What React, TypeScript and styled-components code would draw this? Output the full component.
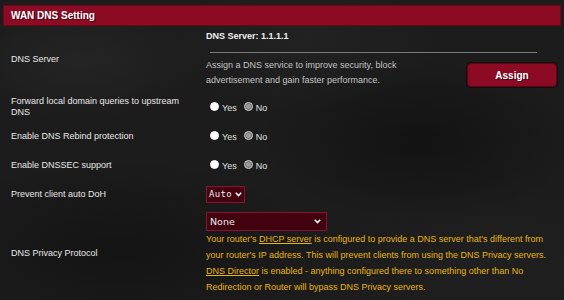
import React from "react";
import styled, { createGlobalStyle } from "styled-components";

const Global = createGlobalStyle`
  html, body { margin: 0; padding: 0; }
  body {
    width: 564px;
    height: 300px;
    overflow: hidden;
    background-color: #1c1c1c;
    background-image:
      radial-gradient(ellipse 120px 60px at 80px 60px, rgba(40,40,40,0.7), transparent),
      radial-gradient(ellipse 160px 80px at 420px 140px, rgba(12,12,12,0.6), transparent),
      radial-gradient(ellipse 140px 70px at 300px 40px, rgba(38,38,38,0.6), transparent),
      radial-gradient(ellipse 200px 90px at 120px 250px, rgba(14,14,14,0.6), transparent),
      radial-gradient(ellipse 180px 80px at 500px 270px, rgba(34,34,34,0.6), transparent);
    font-family: "Liberation Sans", Arial, sans-serif;
    font-size: 9px;
    color: #e6e6e6;
  }
`;

const Page = styled.div`
  padding: 5px 3px 0 3px;
`;

const Header = styled.div`
  height: 19px;
  background: #8d0a24;
  border: 1px solid #6e0618;
  display: flex;
  align-items: center;
  padding-left: 7px;
  font-weight: bold;
  font-size: 10px;
  color: #fff;
  text-shadow: 1px 1px 0 rgba(0, 0, 0, 0.55);
`;

const Row = styled.div<{ $h: number }>`
  display: grid;
  grid-template-columns: 203px 1fr;
  height: ${(p) => p.$h}px;
`;

const Label = styled.div`
  display: flex;
  align-items: center;
  padding-left: 8px;
  line-height: 11px;
  color: #e8e8e8;
`;

const Value = styled.div<{ $top?: boolean }>`
  display: flex;
  flex-direction: column;
  justify-content: ${(p) => (p.$top ? "flex-start" : "center")};
`;

const Title = styled.div`
  margin-top: 4px;
  font-weight: bold;
  line-height: 12px;
  color: #f0f0f0;
`;

const Rule = styled.div`
  height: 1px;
  background: #7a7a7a;
  margin: 10px 24px 5px 4px;
`;

const DescRow = styled.div`
  display: flex;
  align-items: center;
  justify-content: space-between;
  padding-right: 4px;
`;

const Desc = styled.div`
  line-height: 15.3px;
  color: #c4c4c4;
`;

const AssignButton = styled.button`
  width: 90px;
  height: 24px;
  margin-top: 4px;
  background: #8d0a24;
  border: 1px solid #5a0414;
  border-radius: 4px;
  color: #fff;
  font-family: "Liberation Sans", Arial, sans-serif;
  font-weight: bold;
  font-size: 10px;
  text-shadow: 1px 1px 0 rgba(0, 0, 0, 0.6);
  box-shadow: 0 0 0 1px rgba(0, 0, 0, 0.4);
  padding: 0;
`;

const RadioGroup = styled.div`
  display: flex;
  align-items: center;
  padding-left: 4px;
`;

const RadioDot = styled.span<{ $checked?: boolean }>`
  width: 9px;
  height: 9px;
  border-radius: 50%;
  box-sizing: border-box;
  background: ${(p) => (p.$checked ? "#9a9a9a" : "#ffffff")};
  border: ${(p) => (p.$checked ? "1.5px solid #c8c8c8" : "1px solid #f4f4f4")};
  box-shadow: ${(p) => (p.$checked ? "inset 0 0 0 1px #6a6a6a" : "none")};
  margin-right: 3px;
  margin-top: -2px;
`;

const RadioText = styled.span<{ $gap?: number }>`
  color: #e0e0e0;
  font-size: 9px;
  margin-top: 2px;
  margin-right: ${(p) => p.$gap ?? 0}px;
`;

const Select = styled.div<{ $w: number; $h: number; $mt?: number; $mono?: boolean }>`
  width: ${(p) => p.$w}px;
  height: ${(p) => p.$h}px;
  margin-top: ${(p) => p.$mt ?? 0}px;
  box-sizing: border-box;
  background: #42020f;
  border: 1px solid #85122e;
  display: flex;
  align-items: center;
  justify-content: space-between;
  padding: ${(p) => (p.$mono ? "0 2px 0 2px" : "0 5px 0 3px")};
  color: #eaeaea;
  font-family: ${(p) => (p.$mono ? '"DejaVu Sans Mono", monospace' : '"DejaVu Sans", sans-serif')};
  font-size: ${(p) => (p.$mono ? "9px" : "9.5px")};
  letter-spacing: ${(p) => (p.$mono ? "0.3px" : "0")};
`;

const Chevron = () => (
  <svg width="7" height="5" viewBox="0 0 7 5" style={{ flexShrink: 0 }}>
    <path d="M0.8 0.8 L3.5 3.6 L6.2 0.8" fill="none" stroke="#ffffff" strokeWidth="1.5" />
  </svg>
);

const Hint = styled.div`
  line-height: 16px;
  color: #e8b410;
`;

const HintLink = styled.span`
  text-decoration: underline;
`;

function YesNo() {
  return (
    <RadioGroup>
      <RadioDot />
      <RadioText $gap={7}>Yes</RadioText>
      <RadioDot $checked />
      <RadioText>No</RadioText>
    </RadioGroup>
  );
}

export default function App() {
  return (
    <>
      <Global />
      <Page>
        <Header>WAN DNS Setting</Header>
        <Row $h={66}>
          <Label>DNS Server</Label>
          <Value $top>
            <Title>DNS Server: 1.1.1.1</Title>
            <Rule />
            <DescRow>
              <Desc>
                Assign a DNS service to improve security, block
                <br />
                advertisement and gain faster performance.
              </Desc>
              <AssignButton>Assign</AssignButton>
            </DescRow>
          </Value>
        </Row>
        <Row $h={30}>
          <Label>
            Forward local domain queries to upstream
            <br />
            DNS
          </Label>
          <Value>
            <YesNo />
          </Value>
        </Row>
        <Row $h={28}>
          <Label>Enable DNS Rebind protection</Label>
          <Value>
            <YesNo />
          </Value>
        </Row>
        <Row $h={30}>
          <Label>Enable DNSSEC support</Label>
          <Value>
            <YesNo />
          </Value>
        </Row>
        <Row $h={28}>
          <Label>Prevent client auto DoH</Label>
          <Value>
            <Select $w={39} $h={17} $mono>
              <span>Auto</span>
              <Chevron />
            </Select>
          </Value>
        </Row>
        <Row $h={90}>
          <Label>DNS Privacy Protocol</Label>
          <Value $top>
            <Select $w={121} $h={19} $mt={4}>
              <span>None</span>
              <Chevron />
            </Select>
            <Hint>
              Your router's <HintLink>DHCP server</HintLink> is configured to provide a DNS server that's different from
              <br />
              your router's IP address. This will prevent clients from using the DNS Privacy servers.
              <br />
              <HintLink>DNS Director</HintLink> is enabled - anything configured there to something other than No
              <br />
              Redirection or Router will bypass DNS Privacy servers.
            </Hint>
          </Value>
        </Row>
      </Page>
    </>
  );
}
